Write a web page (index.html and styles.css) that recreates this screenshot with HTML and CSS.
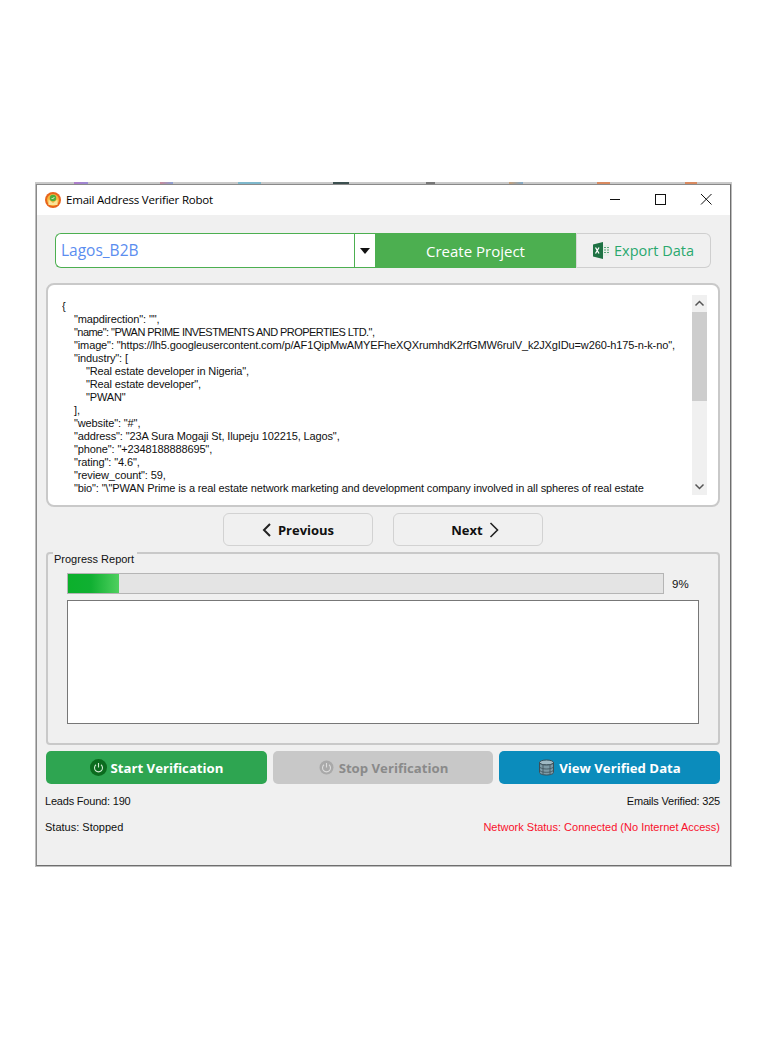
FILE: index.html
```html
<!DOCTYPE html>
<html lang="en">
<head>
<meta charset="utf-8">
<title>Email Address Verifier Robot</title>
<link rel="stylesheet" href="styles.css">
</head>
<body>
<div class="backdrop">
  <div class="window">
    <header class="titlebar">
      <svg class="app-icon" width="16" height="16" viewBox="0 0 16 16">
        <circle cx="8" cy="8" r="8" fill="#e8641c"/>
        <circle cx="8" cy="8" r="6" fill="#f6b63e"/>
        <path d="M3.500 7.500L8 11l4.500-3.500V13h-9z" fill="#fbe39a"/>
        <circle cx="8" cy="6" r="3.200" fill="#4cae3c"/>
        <path d="M6.600 6l1 1 1.800-2" fill="none" stroke="#fff" stroke-width="0.800"/>
      </svg>
      <span class="title">Email Address Verifier Robot</span>
      <div class="win-controls">
        <svg class="win-btn" width="46" height="30" viewBox="0 0 46 30"><path d="M18 14.500h10" stroke="#111" stroke-width="1"/></svg>
        <svg class="win-btn" width="46" height="30" viewBox="0 0 46 30"><rect x="17.500" y="9.500" width="10" height="10" fill="none" stroke="#111"/></svg>
        <svg class="win-btn" width="46" height="30" viewBox="0 0 46 30"><path d="M17 9l10.500 10.500M27.500 9L17 19.500" stroke="#111" stroke-width="1" fill="none"/></svg>
      </div>
    </header>
    <main class="content">
      <div class="project-row">
        <div class="combo">
          <span class="combo-value">Lagos_B2B</span>
          <span class="combo-arrow"><svg width="10" height="6" viewBox="0 0 10 6"><path d="M0 0h10L5 6z" fill="#111"/></svg></span>
        </div>
        <button class="create-btn">Create Project</button>
        <button class="export-btn">
          <svg width="16" height="17" viewBox="0 0 16 17">
            <path d="M0 2.500L10 0v17L0 14.500z" fill="#1f7244"/>
            <path d="M10 3h6v11h-6z" fill="#e8efe9"/>
            <path d="M11 5h2v1h-2zM14 5h2v1h-2zM11 7.500h2v1h-2zM14 7.500h2v1h-2zM11 10h2v1h-2zM14 10h2v1h-2z" fill="#5da57c"/>
            <path d="M2.500 5.500l3.500 6M6 5.500l-3.500 6" stroke="#fff" stroke-width="1.300" fill="none"/>
          </svg>
          <span>Export Data</span>
        </button>
      </div>

      <section class="json-panel">
        <div class="json-text">
          <div class="ln">{</div>
          <div class="ln i1">"mapdirection": "",</div>
          <div class="ln i1 caps">"name": "PWAN PRIME INVESTMENTS AND PROPERTIES LTD.",</div>
          <div class="ln i1">"image": "https://lh5.googleusercontent.com/p/AF1QipMwAMYEFheXQXrumhdK2rfGMW6rulV_k2JXgIDu=w260-h175-n-k-no",</div>
          <div class="ln i1">"industry": [</div>
          <div class="ln i2">"Real estate developer in Nigeria",</div>
          <div class="ln i2">"Real estate developer",</div>
          <div class="ln i2">"PWAN"</div>
          <div class="ln i1">],</div>
          <div class="ln i1">"website": "#",</div>
          <div class="ln i1">"address": "23A Sura Mogaji St, Ilupeju 102215, Lagos",</div>
          <div class="ln i1">"phone": "+2348188888695",</div>
          <div class="ln i1">"rating": "4.6",</div>
          <div class="ln i1">"review_count": 59,</div>
          <div class="ln i1">"bio": "\"PWAN Prime is a real estate network marketing and development company involved in all spheres of real estate</div>
        </div>
        <div class="scrollbar">
          <svg class="scroll-arrow" width="15" height="17" viewBox="0 0 15 17"><path d="M3.500 10.500l4-4 4 4" fill="none" stroke="#555" stroke-width="1.500"/></svg>
          <div class="scroll-track"><div class="scroll-thumb"></div></div>
          <svg class="scroll-arrow" width="15" height="17" viewBox="0 0 15 17"><path d="M3.500 6.500l4 4 4-4" fill="none" stroke="#555" stroke-width="1.500"/></svg>
        </div>
      </section>

      <nav class="nav-row">
        <button class="nav-btn">
          <svg width="10" height="14" viewBox="0 0 10 14"><path d="M8 1L2 7l6 6" fill="none" stroke="#222" stroke-width="2"/></svg>
          <span>Previous</span>
        </button>
        <button class="nav-btn next">
          <span>Next</span>
          <svg width="10" height="16" viewBox="0 0 10 16"><path d="M1.500 1l7 7-7 7" fill="none" stroke="#222" stroke-width="1.600"/></svg>
        </button>
      </nav>

      <section class="progress-group">
        <span class="group-label">Progress Report</span>
        <div class="progress-row">
          <div class="progress-bar"><div class="progress-fill" style="width:8.500%"></div></div>
          <span class="progress-pct">9%</span>
        </div>
        <div class="log-box"></div>
      </section>

      <div class="action-row">
        <button class="action-btn start">
          <svg width="17" height="17" viewBox="0 0 17 17"><circle cx="8.500" cy="8.500" r="8.500" fill="#0b6b1e"/><path d="M6 5.800a4 4 0 1 0 5 0M8.500 4v4.500" fill="none" stroke="#cfe9d2" stroke-width="1.100"/></svg>
          <span>Start Verification</span>
        </button>
        <button class="action-btn stop">
          <svg width="17" height="17" viewBox="0 0 17 17"><circle cx="8.500" cy="8.500" r="7" fill="#a9a9a9"/><path d="M6 5.800a4 4 0 1 0 5 0M8.500 4v4.500" fill="none" stroke="#dcdcdc" stroke-width="1.100"/></svg>
          <span>Stop Verification</span>
        </button>
        <button class="action-btn view">
          <svg width="17" height="17" viewBox="0 0 17 17">
            <ellipse cx="8.500" cy="3.500" rx="7" ry="2.500" fill="#9fb9c4" stroke="#3c4f58"/>
            <path d="M1.500 3.500v10c0 1.400 3.100 2.500 7 2.500s7-1.100 7-2.500v-10c0 1.400-3.100 2.500-7 2.500s-7-1.100-7-2.500z" fill="#7d9aa6" stroke="#3c4f58"/>
            <path d="M1.500 7.500c0 1.400 3.100 2.500 7 2.500s7-1.100 7-2.500M1.500 10.800c0 1.400 3.100 2.500 7 2.500s7-1.100 7-2.500M5 6v9.500M12 6v9.500" fill="none" stroke="#3c4f58" stroke-width="0.800"/>
          </svg>
          <span>View Verified Data</span>
        </button>
      </div>

      <div class="status-row first">
        <span class="tight">Leads Found: 190</span>
        <span class="tight">Emails Verified: 325</span>
      </div>
      <div class="status-row">
        <span>Status: Stopped</span>
        <span class="net">Network Status: Connected (No Internet Access)</span>
      </div>
    </main>
  </div>
</div>
</body>
</html>
```

FILE: styles.css
```css
* { box-sizing: border-box; }
html, body { margin: 0; background: #fff; }
body { padding: 182px 30px 0 35px; font-family: "Liberation Sans", Arial, sans-serif; }
button { font-family: inherit; padding: 0; cursor: default; }

.backdrop {
  width: 697px;
  height: 685px;
  padding: 2px 1px 1px;
  background:
    linear-gradient(90deg,
      #c9c9c9 39px, #b07cc8 39px, #9a8ad4 53px, #c9c9c9 53px,
      #c9c9c9 125px, #c88a98 125px, #8aa0d4 138px, #c9c9c9 138px,
      #c9c9c9 203px, #7fb8cc 203px, #7fb8cc 226px, #c9c9c9 226px,
      #c9c9c9 298px, #3c5050 298px, #3c5050 314px, #c9c9c9 314px,
      #c9c9c9 391px, #777 391px, #777 400px, #c9c9c9 400px,
      #c9c9c9 474px, #c8a078 474px, #80a8c8 488px, #c9c9c9 488px,
      #c9c9c9 562px, #d98a60 562px, #d98a60 575px, #c9c9c9 575px,
      #c9c9c9 650px, #d98a60 650px, #d98a60 662px, #c9c9c9 662px) top / 100% 2px no-repeat,
    #bdbdbd;
}
.window {
  height: 100%;
  display: flex;
  flex-direction: column;
  background: #f0f0f0;
  border: 1px solid #6e6e6e;
  border-top-color: #8a8a8a;
  border-left-color: #8a8a8a;
}

.titlebar {
  height: 30px;
  flex: none;
  display: flex;
  align-items: center;
  background: #fff;
  padding-left: 8px;
}
.app-icon { flex: none; }
.title { margin: 0 0 2px 5px; font-size: 11.500px; font-family: "Open Sans", sans-serif; color: #000; letter-spacing: -0.2px; }
.win-controls { margin-left: auto; display: flex; }
.win-btn { display: block; }

.content { flex: 1; padding: 18px 10px 0 9px; display: flex; flex-direction: column; }

.project-row { display: flex; height: 35px; margin: 0 9px 0 9px; }
.combo {
  width: 320px;
  display: flex;
  background: #fff;
  border: 1px solid #4caf50;
  border-right: 0;
  border-radius: 6px 0 0 6px;
}
.combo-value { flex: 1; padding-left: 5px; line-height: 33px; font-size: 15.500px; font-family: "Open Sans", sans-serif; color: #5b8def; }
.combo-arrow { width: 21px; border-left: 1px solid #4caf50; display: flex; align-items: center; justify-content: center; }
.create-btn {
  width: 201px;
  border: 0;
  background: #4caf50;
  color: #fff;
  font-size: 15px;
  font-family: "Open Sans", sans-serif;
}
.export-btn {
  width: 135px;
  display: flex;
  align-items: center;
  justify-content: center;
  gap: 5px;
  background: #f0f0f0;
  border: 1px solid #cfcfcf;
  border-left: 1px solid #d8d8d8;
  border-radius: 0 6px 6px 0;
  color: #2aa86e;
  font-size: 14.500px;
  font-family: "Open Sans", sans-serif;
}

.json-panel {
  height: 224px;
  margin-top: 15px;
  background: #fff;
  border: 2px solid #c9c9c9;
  border-radius: 8px;
  display: flex;
  padding: 10px 11px 10px 14px;
}
.json-text { flex: 1; min-width: 0; padding-top: 5px; overflow: hidden; font-size: 11px; line-height: 13px; color: #111; letter-spacing: -0.125px; }
.ln { white-space: pre; }
.ln.i1 { padding-left: 12px; }
.ln.i2 { padding-left: 24px; }
.ln.caps { letter-spacing: -0.55px; }

.scrollbar { width: 15px; flex: none; display: flex; flex-direction: column; background: #f0f0f0; }
.scroll-arrow { flex: none; display: block; }
.scroll-track { flex: 1; }
.scroll-thumb { height: 89px; background: #cdcdcd; }

.nav-row { display: flex; justify-content: center; gap: 20px; margin-top: 6px; }
.nav-btn {
  width: 150px;
  height: 33px;
  display: flex;
  align-items: center;
  justify-content: center;
  gap: 6px;
  background: #f0f0f0;
  border: 1px solid #d2d2d2;
  border-radius: 6px;
  font-size: 13px;
  font-weight: 700;
  font-family: "Open Sans", sans-serif;
  color: #111;
}
.nav-btn.next { padding-left: 14px; }

.progress-group {
  position: relative;
  height: 193px;
  margin-top: 6px;
  border: 2px solid #c9c9c9;
  border-radius: 4px;
  padding: 19px 19px 0;
}
.group-label {
  position: absolute;
  left: 5px;
  top: -3px;
  padding: 0 3px 0 1px;
  background: #f0f0f0;
  font-size: 11px;
  line-height: 16px;
  color: #111;
}
.progress-row { display: flex; align-items: center; height: 21px; }
.progress-bar { width: 597px; height: 21px; flex: none; border: 1px solid #b5b5b5; background: #e4e4e4; }
.progress-fill { height: 100%; background: linear-gradient(90deg, #0bb02b 0%, #10b032 45%, #4fd05f 100%); }
.progress-pct { margin-left: 8px; font-size: 11.500px; color: #111; }
.log-box { width: 632px; height: 124px; margin-top: 6px; background: #fff; border: 1px solid #777; }

.action-row { display: flex; justify-content: space-between; margin-top: 6px; }
.action-btn {
  width: 221px;
  height: 33px;
  display: flex;
  align-items: center;
  justify-content: center;
  gap: 4px;
  border: 0;
  border-radius: 5px;
  font-size: 13.200px;
  font-weight: 700;
  font-family: "Open Sans", sans-serif;
  color: #fff;
}
.action-btn.start { background: #2ea551; }
.action-btn.stop { width: 220px; background: #c8c8c8; color: #8a8a8a; }
.action-btn.view { background: #0b8cbc; }

.status-row { display: flex; justify-content: space-between; margin: 0 0 0 -1px; height: 26px; align-items: center; font-size: 11px; color: #111; }
.status-row.first { margin-top: 4px; }
.tight { letter-spacing: -0.2px; }
.net { color: #f8102c; }
```
